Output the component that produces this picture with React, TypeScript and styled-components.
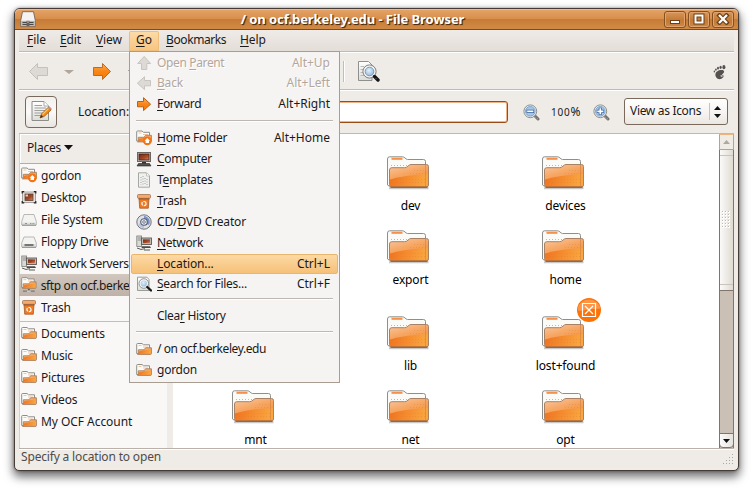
import React from 'react';
import styled, { createGlobalStyle, css } from 'styled-components';

const Global = createGlobalStyle`
  * { box-sizing: border-box; }
  body { margin: 0; background: #fff; }
`;

const Page = styled.div`
  width: 753px;
  height: 491px;
  padding: 8px 14px 20px;
  overflow: hidden;
  background: #fff;
  color: #1a1a1a;
  font: 12px/16px 'Noto Sans', sans-serif;
  letter-spacing: -0.25px;
  white-space: nowrap;
`;

const Window = styled.div`
  width: 725px;
  height: 463px;
  display: flex;
  flex-direction: column;
  border: 1px solid #453c38;
  border-radius: 6px 6px 5px 5px;
  background: #efebe7;
  box-shadow: 0 5px 10px 1px rgba(0, 0, 0, 0.55), 0 0 3px rgba(0, 0, 0, 0.4);
`;

const TitleBar = styled.header`
  height: 21px;
  flex: none;
  display: flex;
  align-items: center;
  padding: 0 4px 0 5px;
  border-bottom: 1px solid #7e4b1f;
  border-radius: 5px 5px 0 0;
  box-shadow: inset 0 1px #efbd8b;
  background: linear-gradient(#e4a469 0, #d88f4b 48%, #c67c35 52%, #d18a46 100%);
`;

const Title = styled.h1`
  flex: 1;
  margin: 0;
  padding-left: 5px;
  text-align: center;
  font-size: 13px;
  line-height: 18px;
  letter-spacing: -0.07px;
  color: #fff;
  text-shadow: 1px 1px 1px #4a2c10, 1px 1px 0 rgba(70, 40, 15, 0.7);
`;

const TitleButtons = styled.div`
  display: flex;
  gap: 2px;
`;

const TitleButton = styled.button`
  width: 22px;
  height: 17px;
  padding: 0;
  display: grid;
  place-items: center;
  border: 1px solid #84501f;
  border-radius: 3px;
  box-shadow: inset 0 0 0 1px #e0a472;
  background: linear-gradient(#d99658, #c27a35 55%, #cc8845);
`;

const MenuBar = styled.nav`
  height: 23px;
  flex: none;
  margin: 0 4px;
  display: grid;
  grid-template-columns: 34px 36px 40px 30px 74px 40px;
  border-bottom: 1px solid #fff;
  box-shadow: inset 0 -1px #c2bab2;
  background: linear-gradient(#efebe8, #e3ddd7);
`;

const MenuTitle = styled.div<{ $open?: boolean; $tight?: number }>`
  position: relative;
  height: 21px;
  padding: 1px 0 0 7px;
  line-height: 18px;
  letter-spacing: ${(p) => p.$tight ?? -0.1}px;
  &:first-child { padding-left: 8px; }
  ${(p) => p.$open && css`
    margin-top: 1px;
    height: 20px;
    padding-top: 0;
    border-radius: 2px 2px 0 0;
    box-shadow: inset 0 0 0 1px #edbd7c;
    background: linear-gradient(#fddcaa, #f6c47e);
  `}
`;

const Menu = styled.div`
  position: absolute;
  z-index: 5;
  left: 0;
  top: 20px;
  width: 211px;
  height: 332px;
  display: flex;
  flex-direction: column;
  border: 1px solid #a99d92;
  padding: 0 1px;
  background: #f6f4f2;
`;

const MenuItem = styled.div<{ $hot?: boolean; $off?: boolean; $h?: number; $tight?: number }>`
  height: ${(p) => p.$h ?? 21}px;
  flex: none;
  display: grid;
  grid-template-columns: 16px 1fr auto;
  column-gap: 5px;
  align-items: center;
  padding: 0 8px 0 5px;
  letter-spacing: ${(p) => p.$tight ?? -0.25}px;
  color: ${(p) => (p.$off ? '#b3a79c' : '#1a1a1a')};
  text-shadow: ${(p) => (p.$off ? '1px 1px #fff' : 'none')};
  border-radius: 2px;
  ${(p) => p.$hot && css`
    border: 1px solid #e9b66d;
    padding: 0 7px 0 4px;
    margin-top: 1px;
    height: 20px;
    background: linear-gradient(#fdd9a4, #f5c178);
  `}
`;

const Shortcut = styled.span`
  letter-spacing: 0;
`;

const Separator = styled.hr<{ $h: number; $line: number }>`
  height: ${(p) => p.$h}px;
  flex: none;
  width: 197px;
  margin: 0 0 0 5px;
  border: 0;
  background: linear-gradient(#bdb8b4, #bdb8b4) 0 ${(p) => p.$line}px / 100% 1px no-repeat,
    linear-gradient(#fff, #fff) 0 ${(p) => p.$line + 1}px / 100% 1px no-repeat;
`;

const Key = styled.u`
  text-decoration-thickness: 1px;
  text-underline-offset: 2px;
  text-decoration-skip-ink: none;
`;

const ToolBar = styled.div`
  height: 38px;
  flex: none;
  margin: 0 4px;
  display: flex;
  align-items: center;
  padding-left: 9px;
  border-bottom: 1px solid #fff;
  box-shadow: inset 0 -1px #c2bab2;
  background: #efebe7;
`;

const ToolDivider = styled.span`
  width: 2px;
  height: 21px;
  margin: 0 12px 1px 205px;
  border-left: 1px solid #c4bdb6;
  border-right: 1px solid #fff;
`;

const Slot = styled.span<{ $left?: number }>`
  display: flex;
  margin-left: ${(p) => p.$left ?? 0}px;
`;

const Throbber = styled.span`
  display: flex;
  margin: 2px 8px 0 auto;
`;

const LocationBar = styled.div`
  height: 42px;
  flex: none;
  margin: 0 4px;
  display: flex;
  align-items: center;
  padding: 0 6px;
`;

const EditButton = styled.button`
  width: 32px;
  height: 32px;
  padding: 0 0 2px;
  margin-right: 21px;
  display: grid;
  place-items: center;
  border: 1px solid #79695d;
  border-radius: 4px;
  background: linear-gradient(#f3f1ee, #fbfaf9 50%, #e9e5e0);
`;

const LocationLabel = styled.label`
  width: 57px;
  padding-bottom: 1px;
  letter-spacing: -0.02px;
`;

const Entry = styled.input`
  width: 373px;
  height: 22px;
  padding: 0 4px;
  border: 1px solid #9c4d16;
  border-radius: 3px;
  outline: none;
  box-shadow: inset 0 0 0 1px #f0b285;
  background: #fff;
`;

const Zoom = styled.div`
  flex: 1;
  display: flex;
  align-items: center;
  padding-left: 15px;
`;

const ZoomLevel = styled.span`
  width: 32px;
  margin: 0 10px 0 11px;
  letter-spacing: 0;
`;

const SmallDigits = styled.span`
  font-size: 10px;
  letter-spacing: 0.8px;
`;

const Combo = styled.button`
  width: 104px;
  height: 27px;
  display: flex;
  align-items: center;
  padding: 0 6px 2px 5px;
  margin-bottom: 1px;
  border: 1px solid #79695d;
  border-radius: 3px;
  font: inherit;
  letter-spacing: -0.32px;
  color: inherit;
  background: linear-gradient(#fff, #f7f5f3 50%, #ebe7e2);
`;

const ComboArrows = styled.span`
  margin: 2px 0 0 auto;
  height: 17px;
  display: grid;
  place-items: center;
  padding-left: 4px;
  border-left: 1px solid #c8c1ba;
`;

const Content = styled.main`
  height: 315px;
  flex: none;
  margin: 0 4px;
  display: grid;
  grid-template-columns: 148px 6px 546px 15px;
  border-top: 1px solid #c4b8ab;
`;

const Sidebar = styled.aside`
  background: #faf8f7;
  border-left: 1px solid #d6cfc9;
`;

const PlacesHeader = styled.div`
  height: 30px;
  display: flex;
  align-items: center;
  gap: 3px;
  padding: 0 0 2px 7px;
  letter-spacing: -0.2px;
  border-bottom: 1px solid #b8aca0;
  background: #efebe7;
  box-shadow: inset 1px 1px #fff;
`;

const Place = styled.div<{ $selected?: boolean; $tight?: number }>`
  height: 22px;
  margin-left: -1px;
  display: flex;
  align-items: center;
  gap: 4px;
  padding-left: 2px;
  overflow: hidden;
  letter-spacing: ${(p) => p.$tight ?? -0.2}px;
  background: ${(p) => (p.$selected ? 'linear-gradient(#d1c7be, #bfb2a8)' : 'transparent')};
`;

const PlaceName = styled.span`
  padding-top: 2px;
`;

const PlaceSeparator = styled.hr`
  height: 1px;
  margin: 3px 0 0;
  border: 0;
  background: #c4beb8;
`;

const Gutter = styled.div`
  background: #efebe7;
`;

const IconView = styled.section`
  height: 314px;
  overflow: hidden;
  padding: 22px 0 0 5px;
  display: grid;
  grid-template-columns: repeat(3, 155px);
  grid-template-rows: 74px 74px 86px 74px;
  align-items: end;
  background: #fff;
`;

const Folder = styled.figure<{ $col: number; $row: number }>`
  grid-column: ${(p) => p.$col};
  grid-row: ${(p) => p.$row};
  position: relative;
  height: 74px;
  margin: 0;
  display: flex;
  flex-direction: column;
  align-items: center;
  color: #000;
  letter-spacing: -0.15px;
`;

const FolderIcon = styled.span`
  height: 42px;
  margin-right: 5px;
`;

const Emblem = styled.span`
  position: absolute;
  left: 89px;
  top: -18px;
  display: flex;
`;

const ScrollBar = styled.div`
  height: 314px;
  display: flex;
  flex-direction: column;
  border: solid #80756c;
  border-width: 0 1px;
  background: #cbc0b6;
`;

const ScrollUp = styled.div`
  height: 16px;
  display: grid;
  place-items: center;
  margin: 0 -1px;
  border: 1px solid #b0a498;
  border-top-color: #eeb67e;
  background: #efece6;
`;

const Slider = styled.div`
  height: 141px;
  padding: 5px 0;
  display: grid;
  border-bottom: 1px solid #80756c;
  background: linear-gradient(90deg, #fbfaf9, #dfdbd2);
`;

const SliderGrip = styled.div`
  display: grid;
  place-items: center;
  border: solid #c9c3bb;
  border-width: 1px 0;
`;

const ScrollDown = styled.div`
  height: 15px;
  margin: auto -1px 0;
  display: grid;
  place-items: center;
  border: 1px solid #80756c;
  border-radius: 0 0 4px 4px;
  background: linear-gradient(90deg, #fcfbfa, #e6e1dc);
`;

const StatusBar = styled.footer`
  height: 22px;
  flex: none;
  margin: 0 4px;
  display: flex;
  align-items: flex-start;
  justify-content: space-between;
  padding-left: 2px;
  border-top: 1px solid #b9b1aa;
  box-shadow: inset 0 1px #fff;
  letter-spacing: -0.17px;
  line-height: 15px;
  color: #514b47;
`;

const Grip = styled.svg`
  margin-top: 5px;
`;

const Defs = styled.svg`
  display: block;
`;

function Gradients() {
  return (
    <Defs width="0" height="0">
      <defs>
        <linearGradient id="front" x1="0" y1="0" x2="0.5" y2="1">
          <stop offset="0" stopColor="#fac9a4" /><stop offset="0.45" stopColor="#f6a866" /><stop offset="1" stopColor="#f58a30" />
        </linearGradient>
        <linearGradient id="shine" x1="0" y1="0" x2="1" y2="0.1">
          <stop offset="0" stopColor="#f0721f" /><stop offset="1" stopColor="#f9a640" />
        </linearGradient>
        <linearGradient id="orange" x1="0" y1="0" x2="0" y2="1">
          <stop offset="0" stopColor="#fcb055" /><stop offset="0.5" stopColor="#f98515" /><stop offset="1" stopColor="#f57900" />
        </linearGradient>
        <linearGradient id="paper" x1="0" y1="0" x2="0" y2="1">
          <stop offset="0" stopColor="#fff" /><stop offset="1" stopColor="#dcdcd8" />
        </linearGradient>
        <linearGradient id="screen" x1="0" y1="0" x2="1" y2="1">
          <stop offset="0" stopColor="#6c2c16" /><stop offset="0.6" stopColor="#a94a28" /><stop offset="1" stopColor="#d08a6a" />
        </linearGradient>
        <radialGradient id="lens" cx="0.45" cy="0.4" r="0.7">
          <stop offset="0" stopColor="#e3f1fb" /><stop offset="1" stopColor="#77a7d3" />
        </radialGradient>
      </defs>
    </Defs>
  );
}

const BigFolder = () => (
  <svg width="44" height="36" viewBox="0 0 44 36">
    <path d="M3 32.300H42.500" stroke="#000" strokeOpacity=".22" strokeWidth="2" />
    <path d="M1.500 29V3Q1.500.8 3.500.8H16.500Q18 .8 19 2T21.500 3.500H37.500Q39.500 3.500 39.500 5.500V30H3Z" fill="#fafaf6" stroke="#8e8e8a" />
    <path d="M5.500 2.800H16.500" stroke="#f58f4a" strokeWidth="2" />
    <path d="M5 9.500H21" stroke="#b9b9b4" strokeDasharray="1 2" />
    <path d="M3.500 14Q3.500 11.700 5.800 11.700H18.500Q20.500 11.700 22 10.100T25 8.500H40.500Q42.500 8.500 42.500 10.500V29Q42.500 31 40.500 31H5Q3.500 31 3.500 28.500Z" fill="url(#front)" stroke="#a98266" />
    <path d="M4 23.500Q18 19 42 18V28.500Q42 30.300 40.500 30.300H5.500Q4 30.300 4 28.500Z" fill="url(#shine)" />
    <path d="M8 26.500H39M14 23.500H39M28 14.500H39M24 17.500H39" stroke="#d77a2c" strokeOpacity=".3" strokeDasharray="1 2" />
    <path d="M39.500 9V30" stroke="#c77a3c" strokeOpacity=".5" />
    <path d="M4.500 31.200H41.500" stroke="#7c4b2a" />
  </svg>
);

const FolderShape = () => (
  <>
    <path d="M.7 12.500V3.300Q.7 2.500 1.500 2.500H6L7.500 3.800H13.500V12.500Z" fill="#fbfbf8" stroke="#8e8e88" />
    <path d="M2.500 4.500H5.500M7 6H12" stroke="#f3b58c" strokeWidth=".8" />
    <path d="M2.300 12.800V8.800H8L9.600 6.800H15.400V12.600Q15.400 13.400 14.600 13.400H1.600Q2.300 13.300 2.300 12.800Z" fill="url(#front)" stroke="#a77f60" strokeWidth=".9" />
    <path d="M2.800 10.400Q8 8.800 15 8.800V12.800H2.800Z" fill="url(#shine)" />
  </>
);

type GlyphName =
  | 'up' | 'back' | 'forward' | 'homefolder' | 'computer' | 'templates' | 'trash' | 'disc'
  | 'network' | 'search' | 'folder' | 'desktop' | 'drive' | 'floppy' | 'sftp';

const arrowRight = 'M1.500 5.500H7.500V1.700L14.600 8.200L7.500 14.600V10.800H1.500Z';

const glyphs: Record<GlyphName, React.ReactNode> = {
  up: <path d={arrowRight} transform="rotate(-90 8 8)" fill="#dddad6" stroke="#c8c4c0" />,
  back: <path d={arrowRight} transform="matrix(-1 0 0 1 16 0)" fill="#dddad6" stroke="#c8c4c0" />,
  forward: <path d={arrowRight} fill="url(#orange)" stroke="#b5601c" />,
  folder: <FolderShape />,
  homefolder: (
    <>
      <g transform="translate(0 -1.500)"><FolderShape /></g>
      <circle cx="11.300" cy="10.800" r="4.400" fill="#f57314" />
      <path d="M11.300 8L14 10.800H13V13H9.600V10.800H8.600Z" fill="#fff" />
    </>
  ),
  computer: (
    <>
      <rect x="1.500" y="1.500" width="13" height="9" fill="#c9c5c1" stroke="#6a6662" />
      <rect x="3" y="3" width="10" height="6" fill="url(#screen)" stroke="#4b1d10" strokeWidth=".8" />
      <path d="M6 11H10V12.500H6Z" fill="#333" />
      <path d="M2.500 12.500H13.500L15 15H1Z" fill="#55524f" stroke="#222" strokeWidth=".6" />
    </>
  ),
  templates: (
    <>
      <path d="M2.500.8H10.500L13.500 3.800V15.200H2.500Z" fill="#f0f1ee" stroke="#a5a8a2" />
      <path d="M5 5V13M7 4V13M9 6V13M11 7V13" stroke="#9fa39c" strokeDasharray="1 1.500" />
      <path d="M10.500 1V4H13.500" fill="#fff" stroke="#b5b8b2" strokeWidth=".8" />
    </>
  ),
  trash: (
    <>
      <path d="M3 5H13L12.300 15.200H3.700Z" fill="#f07a23" stroke="#a55d2c" strokeWidth=".8" />
      <rect x="1.500" y="1.500" width="13" height="3.800" rx="1" fill="#f7a86b" stroke="#a4734c" strokeWidth=".8" />
      <path d="M2.500 6H13.500" stroke="#6f4224" strokeOpacity=".6" />
      <circle cx="8" cy="10.600" r="2.100" fill="none" stroke="#fff" strokeWidth="1.200" strokeDasharray="3.200 1" />
    </>
  ),
  disc: (
    <>
      <circle cx="8" cy="8" r="7.200" fill="#dfe1e5" stroke="#70747c" />
      <path d="M8 2A6 6 0 0 1 13 11L10 9.500A3 3 0 0 0 8 5Z" fill="#7d93c4" />
      <path d="M8 14A6 6 0 0 1 2.500 10L5.500 9A3 3 0 0 0 8 11Z" fill="#b7c4dc" />
      <circle cx="8" cy="8" r="3.300" fill="#eceef2" stroke="#535b74" strokeWidth="1.100" />
      <circle cx="8" cy="8" r="1.300" fill="#fff" stroke="#626a7c" strokeWidth=".9" />
    </>
  ),
  network: (
    <>
      <rect x=".8" y="1" width="4.800" height="10.500" fill="#d9d9d5" stroke="#7b7b77" strokeWidth=".8" />
      <path d="M1.800 3H5M1.800 5H5" stroke="#777" strokeWidth=".8" />
      <rect x="5.500" y="3" width="10" height="6.500" fill="#bdb9b4" stroke="#5d5a56" strokeWidth=".9" />
      <rect x="7" y="4.400" width="7" height="3.700" fill="url(#screen)" />
      <path d="M6 11.200H14L15 13H5.500Z" fill="#4c4a47" />
      <path d="M1 13Q5 15.500 9 13.700M8 15H14" fill="none" stroke="#575c52" />
    </>
  ),
  search: (
    <>
      <path d="M1.500 1.200H11L13 3.500V14.500H1.500Z" fill="url(#paper)" stroke="#9a9c98" />
      <circle cx="7.800" cy="7.500" r="4" fill="url(#lens)" stroke="#f4f4f2" strokeWidth="1.800" />
      <circle cx="7.800" cy="7.500" r="4.800" fill="none" stroke="#777b80" strokeWidth=".8" />
      <path d="M11.300 11L15 14.500" stroke="#191919" strokeWidth="2.400" strokeLinecap="round" />
    </>
  ),
  desktop: (
    <>
      <rect x="1.500" y="3" width="13" height="10.500" fill="#e4e1dd" stroke="#a5a19d" />
      <rect x="4" y="5" width="8" height="6.500" fill="url(#screen)" stroke="#5a4438" strokeWidth=".8" />
      <path d="M4.500 5.500H7V7.500H4.500Z" fill="#e8cabb" />
      <path d="M1.200 4.500V2.600H3.200M12.800 2.600H14.800V4.500M14.800 12V13.900H12.800M3.200 13.900H1.200V12" fill="none" stroke="#222" strokeWidth="1.200" />
    </>
  ),
  drive: (
    <>
      <path d="M3 3.500H13L15.300 10.500V14H.7V10.500Z" fill="#f3f3f1" stroke="#b1b1ae" strokeWidth=".9" />
      <path d="M1 11.500H15V13.500H1Z" fill="#dededb" />
      <path d="M4 12.500H6" stroke="#78b51e" />
      <path d="M9 12.500H14" stroke="#989895" strokeDasharray="1 .6" />
      <path d="M1 14.200H15" stroke="#777" strokeWidth=".8" />
    </>
  ),
  floppy: (
    <>
      <path d="M3 4H13L15.300 10V14H.7V10Z" fill="#f3f3f1" stroke="#b1b1ae" strokeWidth=".9" />
      <path d="M1 11H15V13.700H1Z" fill="#dededb" />
      <path d="M3.500 12H12.500" stroke="#222" strokeWidth="1.100" />
      <path d="M1 14.300H15" stroke="#777" strokeWidth=".8" />
    </>
  ),
  sftp: (
    <>
      <g transform="translate(0 -2)"><FolderShape /></g>
      <path d="M8 12V14.500" stroke="#666" strokeWidth="2" />
      <path d="M2 14.300H14" stroke="#888a85" strokeWidth="1.800" />
      <path d="M6 14.300H10" stroke="#eee" />
    </>
  ),
};

const Glyph = ({ name, size = 16 }: { name: GlyphName; size?: number }) => (
  <svg width={size} height={size} viewBox="0 0 16 16">{glyphs[name]}</svg>
);

const Triangle = ({ color, w = 9, h = 5, up = false }: { color: string; w?: number; h?: number; up?: boolean }) => (
  <svg width={w} height={h} viewBox="0 0 10 5" preserveAspectRatio="none">
    <path d={up ? 'M0 5L5 0L10 5Z' : 'M0 0H10L5 5Z'} fill={color} />
  </svg>
);

const Magnifier = ({ plus = false }: { plus?: boolean }) => (
  <svg width="17" height="17" viewBox="0 0 17 17">
    <path d="M11.500 11.500L15 15" stroke="#71716e" strokeWidth="3" strokeLinecap="round" />
    <path d="M12.500 13.300L14.800 15" stroke="#b9b9b5" strokeDasharray="1 1" />
    <circle cx="7.300" cy="7.300" r="6.400" fill="#e9ebeb" stroke="#8d908e" />
    <circle cx="7.300" cy="7.300" r="4.800" fill="#a5c6ea" stroke="#6f98c6" strokeWidth=".8" />
    <path d={plus ? 'M3.800 7.300H10.800M7.300 3.800V10.800' : 'M3.600 7.300H11'} stroke="#34619b" strokeWidth="3.200" />
    <path d={plus ? 'M4.300 7.300H10.300M7.300 4.300V10.300' : 'M4.200 7.300H10.400'} stroke="#fff" strokeWidth="1.700" />
  </svg>
);

const EditIcon = () => (
  <svg width="22" height="22" viewBox="0 0 22 22">
    <path d="M2 1.500H14L18.500 6V20.500H2Z" fill="url(#paper)" stroke="#8c8e8a" />
    <path d="M14 1.500V6H18.500" fill="#fff" stroke="#a8aaa6" />
    <path d="M4.500 5.500H12M4.500 8H16M4.500 10.500H15M4.500 13H13M4.500 15.500H11" stroke="#9fa19d" />
    <path d="M10 18L11.500 14L18 7.500L21 10L14 16.500Z" fill="#f58b12" stroke="#a8520b" strokeWidth=".8" />
    <path d="M12.500 14.500L18.700 8.300" stroke="#fcc566" strokeWidth="1.200" />
    <path d="M10 18L11.200 15L13 16.700Z" fill="#333" />
    <path d="M18 7.500L19 6.500L21.600 8.800L20.800 10Z" fill="#e98d7d" stroke="#8d8078" strokeWidth=".5" />
  </svg>
);

const Foot = () => (
  <svg width="13" height="15" viewBox="0 0 13 15">
    <g fill="#555150">
      <path d="M7.500 5C11 4.500 12 6.500 10.300 8.200C9.200 9.300 8.600 9.500 9.400 10.300C11 9.600 11 11.500 9.700 12.800C7.800 15 4.500 14.500 3 12C1.300 9 3.300 5.500 7.500 5Z" />
      <ellipse cx="10.900" cy="2.200" rx="1.500" ry="2.100" />
      <ellipse cx="7.600" cy="2.300" rx="1.100" ry="1.600" />
      <ellipse cx="5" cy="3.200" rx=".9" ry="1.400" />
      <ellipse cx="2.900" cy="4.600" rx=".8" ry="1.200" />
      <ellipse cx="1.400" cy="6.500" rx=".7" ry="1" />
    </g>
    <path d="M8.300 10.300C9.300 11 10 10.500 10 10.900C9.600 12 7.800 12 7.200 10.800Z" fill="#efebe7" />
  </svg>
);

type Row = {
  icon?: GlyphName;
  text?: React.ReactNode;
  keys?: string;
  off?: boolean;
  hot?: boolean;
  h?: number;
  tight?: number;
  sep?: [number, number];
};

const menuRows: Row[] = [
  { icon: 'up', text: <>Open <Key>P</Key>arent</>, keys: 'Alt+Up', off: true, tight: -0.36 },
  { icon: 'back', text: <><Key>B</Key>ack</>, keys: 'Alt+Left', off: true, tight: -0.2, h: 20 },
  { icon: 'forward', text: <><Key>F</Key>orward</>, keys: 'Alt+Right', tight: -0.36, h: 22 },
  { sep: [12, 5] },
  { icon: 'homefolder', text: <><Key>H</Key>ome Folder</>, keys: 'Alt+Home' },
  { icon: 'computer', text: <><Key>C</Key>omputer</> },
  { icon: 'templates', text: <>T<Key>e</Key>mplates</> },
  { icon: 'trash', text: <><Key>T</Key>rash</> },
  { icon: 'disc', text: <>CD/<Key>D</Key>VD Creator</>, tight: -0.13 },
  { icon: 'network', text: <><Key>N</Key>etwork</>, tight: -0.32 },
  { text: <><Key>L</Key>ocation...</>, keys: 'Ctrl+L', hot: true, tight: -0.1 },
  { icon: 'search', text: <><Key>S</Key>earch for Files...</>, keys: 'Ctrl+F', h: 20, tight: -0.28 },
  { sep: [12, 4] },
  { text: <>Clea<Key>r</Key> History</>, tight: -0.31, h: 20 },
  { sep: [12, 5] },
  { icon: 'folder', text: '/ on ocf.berkeley.edu', tight: -0.42 },
  { icon: 'folder', text: 'gordon' },
];

const places: { icon: GlyphName; text: string; selected?: boolean; tight?: number }[] = [
  { icon: 'homefolder', text: 'gordon' },
  { icon: 'desktop', text: 'Desktop' },
  { icon: 'drive', text: 'File System', tight: -0.1 },
  { icon: 'floppy', text: 'Floppy Drive' },
  { icon: 'network', text: 'Network Servers', tight: -0.38 },
  { icon: 'sftp', text: 'sftp on ocf.berkeley.edu', selected: true, tight: -0.36 },
  { icon: 'trash', text: 'Trash' },
];

const bookmarks: { text: string; tight?: number }[] = [
  { text: 'Documents', tight: -0.1 },
  { text: 'Music' },
  { text: 'Pictures' },
  { text: 'Videos' },
  { text: 'My OCF Account', tight: -0.05 },
];

const folders: [string, number, number][] = [
  ['dev', 2, 1], ['devices', 3, 1],
  ['export', 2, 2], ['home', 3, 2],
  ['lib', 2, 3], ['lost+found', 3, 3],
  ['mnt', 1, 4], ['net', 2, 4], ['opt', 3, 4],
];

const GoMenu = () => (
  <Menu>
    {menuRows.map((r, i) =>
      r.sep ? (
        <Separator key={i} $h={r.sep[0]} $line={r.sep[1]} />
      ) : (
        <MenuItem key={i} $hot={r.hot} $off={r.off} $h={r.h} $tight={r.tight}>
          {r.icon ? <Glyph name={r.icon} /> : <span />}
          <span>{r.text}</span>
          <Shortcut>{r.keys}</Shortcut>
        </MenuItem>
      ),
    )}
  </Menu>
);

export default function App() {
  return (
    <Page>
      <Global />
      <Gradients />
      <Window>
        <TitleBar>
          <svg width="16" height="16" viewBox="0 0 16 16">
            <path d="M2.500.7H13.500L15.300 9.500V15.300H.7V9.500Z" fill="#f5f3f1" stroke="#75655a" strokeWidth=".9" />
            <path d="M1.200 9.800H14.800V14.800H1.200Z" fill="#b8b5b1" />
            <path d="M2.500 11.500H7M9 11.500H13.500M2.500 13.500H7M9 13.500H13.500" stroke="#4b4947" />
            <path d="M6.500 9.800H9.500V15H6.500Z" fill="#66625e" />
            <path d="M7.300 11H8.700" stroke="#ddd" />
          </svg>
          <Title>/ on ocf.berkeley.edu - File Browser</Title>
          <TitleButtons>
            <TitleButton>
              <svg width="14" height="12" viewBox="0 0 14 12">
                <rect x="2.500" y="7.500" width="9" height="3" fill="#fff" stroke="#6b3f17" />
              </svg>
            </TitleButton>
            <TitleButton>
              <svg width="14" height="12" viewBox="0 0 14 12">
                <path d="M3.500 2.500H10.500V9.500H3.500Z" fill="none" stroke="#6b3f17" strokeWidth="4" />
                <path d="M3.500 2.500H10.500V9.500H3.500Z" fill="none" stroke="#fff" strokeWidth="2" />
              </svg>
            </TitleButton>
            <TitleButton>
              <svg width="14" height="12" viewBox="0 0 14 12">
                <path d="M3.500 2.500L10.500 9.500M10.500 2.500L3.500 9.500" stroke="#6b3f17" strokeWidth="4.400" strokeLinecap="square" />
                <path d="M3.800 2.800L10.200 9.200M10.200 2.800L3.800 9.200" stroke="#fff" strokeWidth="2.300" strokeLinecap="square" />
              </svg>
            </TitleButton>
          </TitleButtons>
        </TitleBar>
        <MenuBar>
          <MenuTitle><Key>F</Key>ile</MenuTitle>
          <MenuTitle><Key>E</Key>dit</MenuTitle>
          <MenuTitle><Key>V</Key>iew</MenuTitle>
          <MenuTitle $open><Key>G</Key>o<GoMenu /></MenuTitle>
          <MenuTitle $tight={-0.4}><Key>B</Key>ookmarks</MenuTitle>
          <MenuTitle><Key>H</Key>elp</MenuTitle>
        </MenuBar>
        <ToolBar>
          <svg width="21" height="19" viewBox="0 0 21 19">
            <path d="M19.500 5.500H9.500V1.500L1.500 9.500L9.500 17.500V13.500H19.500Z" fill="#dddad6" stroke="#c4c0bb" />
          </svg>
          <Slot $left={15}><Triangle color="#b0a69c" w={10} h={4} /></Slot>
          <Slot $left={18}>
            <svg width="20" height="19" viewBox="0 0 20 19">
              <path d="M1.500 5.500H10.500V1.500L18.500 9.500L10.500 17.500V13.500H1.500Z" fill="url(#orange)" stroke="#bd6a22" />
            </svg>
          </Slot>
          <Slot $left={16}><Triangle color="#333" w={10} h={4} /></Slot>
          <ToolDivider />
          <svg width="23" height="23" viewBox="0 0 23 23">
            <path d="M1.500 1.500H11.500L15 5V20.500H1.500Z" fill="url(#paper)" stroke="#8e908c" />
            <path d="M3.500 6.500H7M3.500 9.500H6M3.500 12.500H6M3.500 15.500H7" stroke="#b9bab7" />
            <circle cx="12.500" cy="11.500" r="5.400" fill="url(#lens)" stroke="#f2f2f0" strokeWidth="2.200" />
            <circle cx="12.500" cy="11.500" r="4.300" fill="none" stroke="#6d89a5" strokeWidth=".8" />
            <circle cx="12.500" cy="11.500" r="6.600" fill="none" stroke="#7d8082" />
            <path d="M17.500 16.500L21 20" stroke="#151515" strokeWidth="3.400" strokeLinecap="round" />
            <path d="M18.500 18L20 19.500" stroke="#888" strokeDasharray="1 1" />
          </svg>
          <Throbber><Foot /></Throbber>
        </ToolBar>
        <LocationBar>
          <EditButton><EditIcon /></EditButton>
          <LocationLabel>Location:</LocationLabel>
          <Entry aria-label="Location" />
          <Zoom>
            <Magnifier />
            <ZoomLevel><SmallDigits>100</SmallDigits>%</ZoomLevel>
            <Magnifier plus />
          </Zoom>
          <Combo>
            View as Icons
            <ComboArrows>
              <svg width="7" height="12" viewBox="0 0 7 12">
                <path d="M0 4L3.500 0L7 4ZM0 8H7L3.500 12Z" fill="#111" />
              </svg>
            </ComboArrows>
          </Combo>
        </LocationBar>
        <Content>
          <Sidebar>
            <PlacesHeader>Places<Triangle color="#111" /></PlacesHeader>
            {places.map((p) => (
              <Place key={p.text} $selected={p.selected} $tight={p.tight}>
                <Glyph name={p.icon} />
                <PlaceName>{p.text}</PlaceName>
              </Place>
            ))}
            <PlaceSeparator />
            {bookmarks.map((b) => (
              <Place key={b.text} $tight={b.tight}>
                <Glyph name="folder" />
                <PlaceName>{b.text}</PlaceName>
              </Place>
            ))}
          </Sidebar>
          <Gutter />
          <IconView>
            {folders.map(([name, col, row]) => (
              <Folder key={name} $col={col} $row={row}>
                <FolderIcon><BigFolder /></FolderIcon>
                {name}
                {name === 'lost+found' && (
                  <Emblem>
                    <svg width="24" height="24" viewBox="0 0 24 24">
                      <circle cx="12" cy="12" r="12" fill="#fb7207" />
                      <path d="M.4 10.500A12 12 0 0 1 23.600 10.500Q12 11 1.500 13Z" fill="#fda15a" fillOpacity=".75" />
                      <path d="M5.500 5.500H18.500V18.500H5.500ZM8 8L16 16M16 8L8 16" fill="none" stroke="#fff" strokeWidth="1.200" />
                    </svg>
                  </Emblem>
                )}
              </Folder>
            ))}
          </IconView>
          <ScrollBar>
            <ScrollUp><Triangle color="#b0a89c" w={7} h={4} up /></ScrollUp>
            <Slider>
              <SliderGrip>
                <svg width="9" height="18" viewBox="0 0 9 18">
                  {[0, 3, 6, 9, 12, 15].map((y) =>
                    [0, 3, 6].map((x) => (
                      <g key={`${x}-${y}`}>
                        <rect x={x} y={y} width="2" height="2" fill="#fff" />
                        <rect x={x} y={y} width="1" height="1" fill="#bdb8b0" />
                      </g>
                    )),
                  )}
                </svg>
              </SliderGrip>
            </Slider>
            <ScrollDown><Triangle color="#111" w={7} h={4} /></ScrollDown>
          </ScrollBar>
        </Content>
        <StatusBar>
          <span>Specify a location to open</span>
          <Grip width="11" height="11" viewBox="0 0 11 11">
            {[0, 1, 2, 3].map((r) =>
              Array.from({ length: r + 1 }, (_, c) => (
                <rect key={`${r}-${c}`} x={9 - c * 3} y={r * 3} width="1" height="1" fill="#b0a79f" />
              )),
            )}
          </Grip>
        </StatusBar>
      </Window>
    </Page>
  );
}
